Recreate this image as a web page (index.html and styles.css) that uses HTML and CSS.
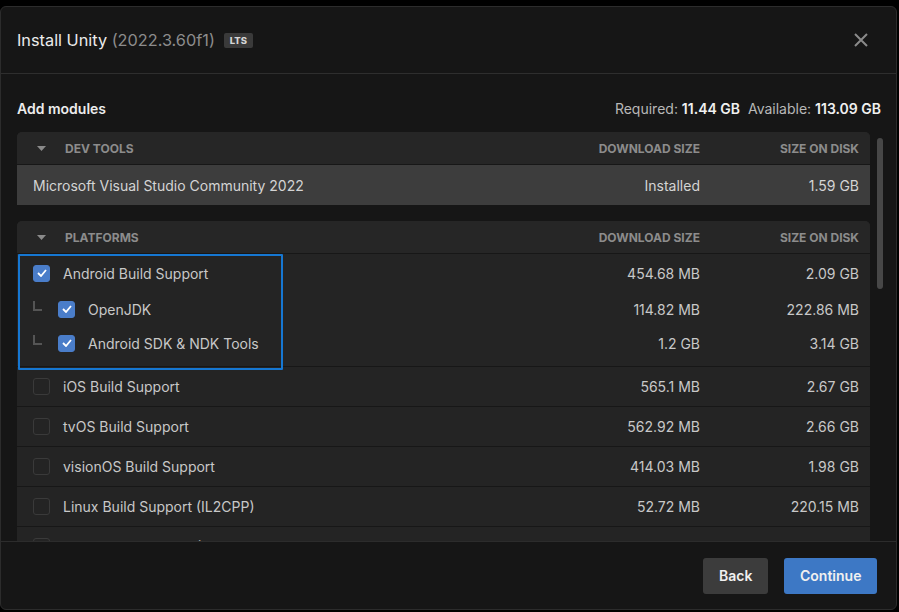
FILE: index.html
```html
<!DOCTYPE html>
<html>
<head>
<meta charset="utf-8">
<link rel="stylesheet" href="styles.css">
</head>
<body>
<div class="dialog">
  <div class="header">
    <div class="title">Install Unity <span class="version">(2022.3.60f1)</span><span class="badge">LTS</span></div>
    <svg class="close" width="16" height="16" viewBox="0 0 16 16"><path d="M2 2L14 14M14 2L2 14" stroke="#8a8a8a" stroke-width="2" fill="none"/></svg>
  </div>
  <div class="content">
    <div class="subheader">
      <div class="subtitle">Add modules</div>
      <div class="space">Required: <b>11.44 GB</b>&nbsp; Available: <b>113.09 GB</b></div>
    </div>
    <div class="scroller">
      <div class="list">
        <div class="section">
          <div class="sec-head">
            <svg class="caret" width="9" height="5" viewBox="0 0 9 5"><path d="M0 0H9L4.5 5Z" fill="#8a8a8a"/></svg>
            <span class="sec-name">DEV TOOLS</span>
            <span class="col-dl">DOWNLOAD SIZE</span>
            <span class="col-disk">SIZE ON DISK</span>
          </div>
          <div class="row installed">
            <span class="name">Microsoft Visual Studio Community 2022</span>
            <span class="col-dl">Installed</span>
            <span class="col-disk">1.59 GB</span>
          </div>
        </div>
        <div class="section">
          <div class="sec-head">
            <svg class="caret" width="9" height="5" viewBox="0 0 9 5"><path d="M0 0H9L4.5 5Z" fill="#8a8a8a"/></svg>
            <span class="sec-name">PLATFORMS</span>
            <span class="col-dl">DOWNLOAD SIZE</span>
            <span class="col-disk">SIZE ON DISK</span>
          </div>
          <div class="group">
            <div class="row parent">
              <span class="cb on"><svg width="10" height="8" viewBox="0 0 10 8"><path d="M1 4L4 7L9 1" stroke="#fff" stroke-width="1.8" fill="none"/></svg></span>
              <span class="name">Android Build Support</span>
              <span class="col-dl">454.68 MB</span>
              <span class="col-disk">2.09 GB</span>
            </div>
            <div class="row child">
              <span class="tree"></span>
              <span class="cb on"><svg width="10" height="8" viewBox="0 0 10 8"><path d="M1 4L4 7L9 1" stroke="#fff" stroke-width="1.8" fill="none"/></svg></span>
              <span class="name">OpenJDK</span>
              <span class="col-dl">114.82 MB</span>
              <span class="col-disk">222.86 MB</span>
            </div>
            <div class="row child">
              <span class="tree"></span>
              <span class="cb on"><svg width="10" height="8" viewBox="0 0 10 8"><path d="M1 4L4 7L9 1" stroke="#fff" stroke-width="1.8" fill="none"/></svg></span>
              <span class="name">Android SDK &amp; NDK Tools</span>
              <span class="col-dl">1.2 GB</span>
              <span class="col-disk">3.14 GB</span>
            </div>
          </div>
          <div class="row item">
            <span class="cb"></span>
            <span class="name">iOS Build Support</span>
            <span class="col-dl">565.1 MB</span>
            <span class="col-disk">2.67 GB</span>
          </div>
          <div class="row item">
            <span class="cb"></span>
            <span class="name">tvOS Build Support</span>
            <span class="col-dl">562.92 MB</span>
            <span class="col-disk">2.66 GB</span>
          </div>
          <div class="row item">
            <span class="cb"></span>
            <span class="name">visionOS Build Support</span>
            <span class="col-dl">414.03 MB</span>
            <span class="col-disk">1.98 GB</span>
          </div>
          <div class="row item">
            <span class="cb"></span>
            <span class="name">Linux Build Support (IL2CPP)</span>
            <span class="col-dl">52.72 MB</span>
            <span class="col-disk">220.15 MB</span>
          </div>
          <div class="row item">
            <span class="cb"></span>
            <span class="name">Linux Build Support (Mono)</span>
            <span class="col-dl">56.87 MB</span>
            <span class="col-disk">218.34 MB</span>
          </div>
        </div>
      </div>
      <div class="track"><div class="thumb"></div></div>
    </div>
  </div>
  <div class="footer">
    <button class="btn back">Back</button>
    <button class="btn primary">Continue</button>
  </div>
</div>
</body>
</html>
```

FILE: styles.css
```css
* { box-sizing: border-box; }
html, body { margin: 0; padding: 0; background: #000; }
body {
  font-family: Inter, "Noto Sans", "Liberation Sans", sans-serif;
  color: #c8c8c8;
  width: 899px;
  height: 612px;
  overflow: hidden;
}
.dialog {
  margin-top: 6px;
  width: 897px;
  height: 604px;
  background: #161616;
  border: 1px solid #2c2c2c;
  border-radius: 6px;
  display: flex;
  flex-direction: column;
  overflow: hidden;
}
.header {
  height: 67px;
  flex: none;
  display: flex;
  align-items: center;
  justify-content: space-between;
  padding: 0 27px 0 16px;
  border-bottom: 1px solid #2e2e2e;
}
.title {
  font-size: 16.3px;
  color: #ececec;
  display: flex;
  align-items: center;
  white-space: pre;
}
.version { color: #8c8c8c; }
.badge {
  margin-left: 9px;
  background: #3a3a3a;
  color: #d6d6d6;
  font-size: 9.5px;
  font-weight: 800;
  padding: 2px 6px;
  border-radius: 2px;
  line-height: 11px;
}
.close { display: block; }
.content {
  flex: 1;
  display: flex;
  flex-direction: column;
  padding: 0 0 0 16px;
  min-height: 0;
}
.subheader {
  height: 58px;
  flex: none;
  display: flex;
  justify-content: space-between;
  align-items: flex-start;
  padding: 25px 15px 0 0;
  line-height: 20px;
}
.subtitle { font-size: 14px; font-weight: 600; color: #ececec; }
.space { font-size: 14px; color: #b8b8b8; }
.space b { color: #f0f0f0; font-weight: 600; }
.scroller {
  flex: 1;
  min-height: 0;
  display: flex;
  gap: 7px;
  overflow: hidden;
}
.list {
  width: 853px;
  flex: none;
  display: flex;
  flex-direction: column;
  gap: 16px;
}
.section {
  background: #242424;
  border-radius: 5px 5px 0 0;
}
.sec-head {
  height: 33px;
  display: flex;
  align-items: center;
  padding: 0 11px 0 20px;
  border-bottom: 1px solid #171717;
  background: #262626;
  border-radius: 5px 5px 0 0;
  font-size: 12px;
  font-weight: 700;
  color: #8c8c8c;
}
.caret { margin-right: 19px; flex: none; }
.sec-name { flex: 1; }
.col-dl { width: 160px; text-align: right; flex: none; }
.col-disk { width: 159px; text-align: right; flex: none; }
.row {
  display: flex;
  align-items: center;
  padding: 0 11px 0 16px;
  font-size: 14px;
  color: #c8c8c8;
}
.row .name { flex: 1; }
.installed {
  height: 40px;
  background: #3d3d3d;
  color: #d4d4d4;
}
.item {
  height: 40px;
  border-top: 1px solid #171717;
}
.cb {
  width: 17px;
  height: 17px;
  border: 1px solid #3a3a3a;
  border-radius: 3px;
  margin-right: 13px;
  flex: none;
  display: flex;
  align-items: center;
  justify-content: center;
}
.cb.on { background: #4a7dc9; border-color: #4a7dc9; }
.group {
  position: relative;
  padding-bottom: 6px;
}
.group::after {
  content: "";
  position: absolute;
  left: 1px;
  top: 0;
  width: 261px;
  height: 112px;
  border: 2px solid #1677d2;
  border-radius: 1px;
  pointer-events: none;
}
.parent { height: 38px; }
.child { height: 34px; }
.tree {
  width: 9px;
  height: 10px;
  border-left: 2px solid #555;
  border-bottom: 2px solid #555;
  margin: -6px 16px 0 0;
  flex: none;
}
.track {
  width: 6px;
  flex: none;
  padding-top: 6px;
}
.thumb {
  width: 6px;
  height: 151px;
  background: #474747;
  border-radius: 3px;
}
.footer {
  height: 68px;
  flex: none;
  border-top: 1px solid #2c2c2c;
  display: flex;
  align-items: center;
  justify-content: flex-end;
  gap: 16px;
  padding: 0 19px 0 0;
}
.btn {
  height: 36px;
  border: none;
  border-radius: 3px;
  font-family: Inter, "Noto Sans", "Liberation Sans", sans-serif;
  font-size: 14px;
  font-weight: 600;
  color: #f0f0f0;
  padding: 0 16px;
}
.back { background: #3c3c3c; width: 65px; }
.primary { background: #3d78c5; width: 93px; }
```
